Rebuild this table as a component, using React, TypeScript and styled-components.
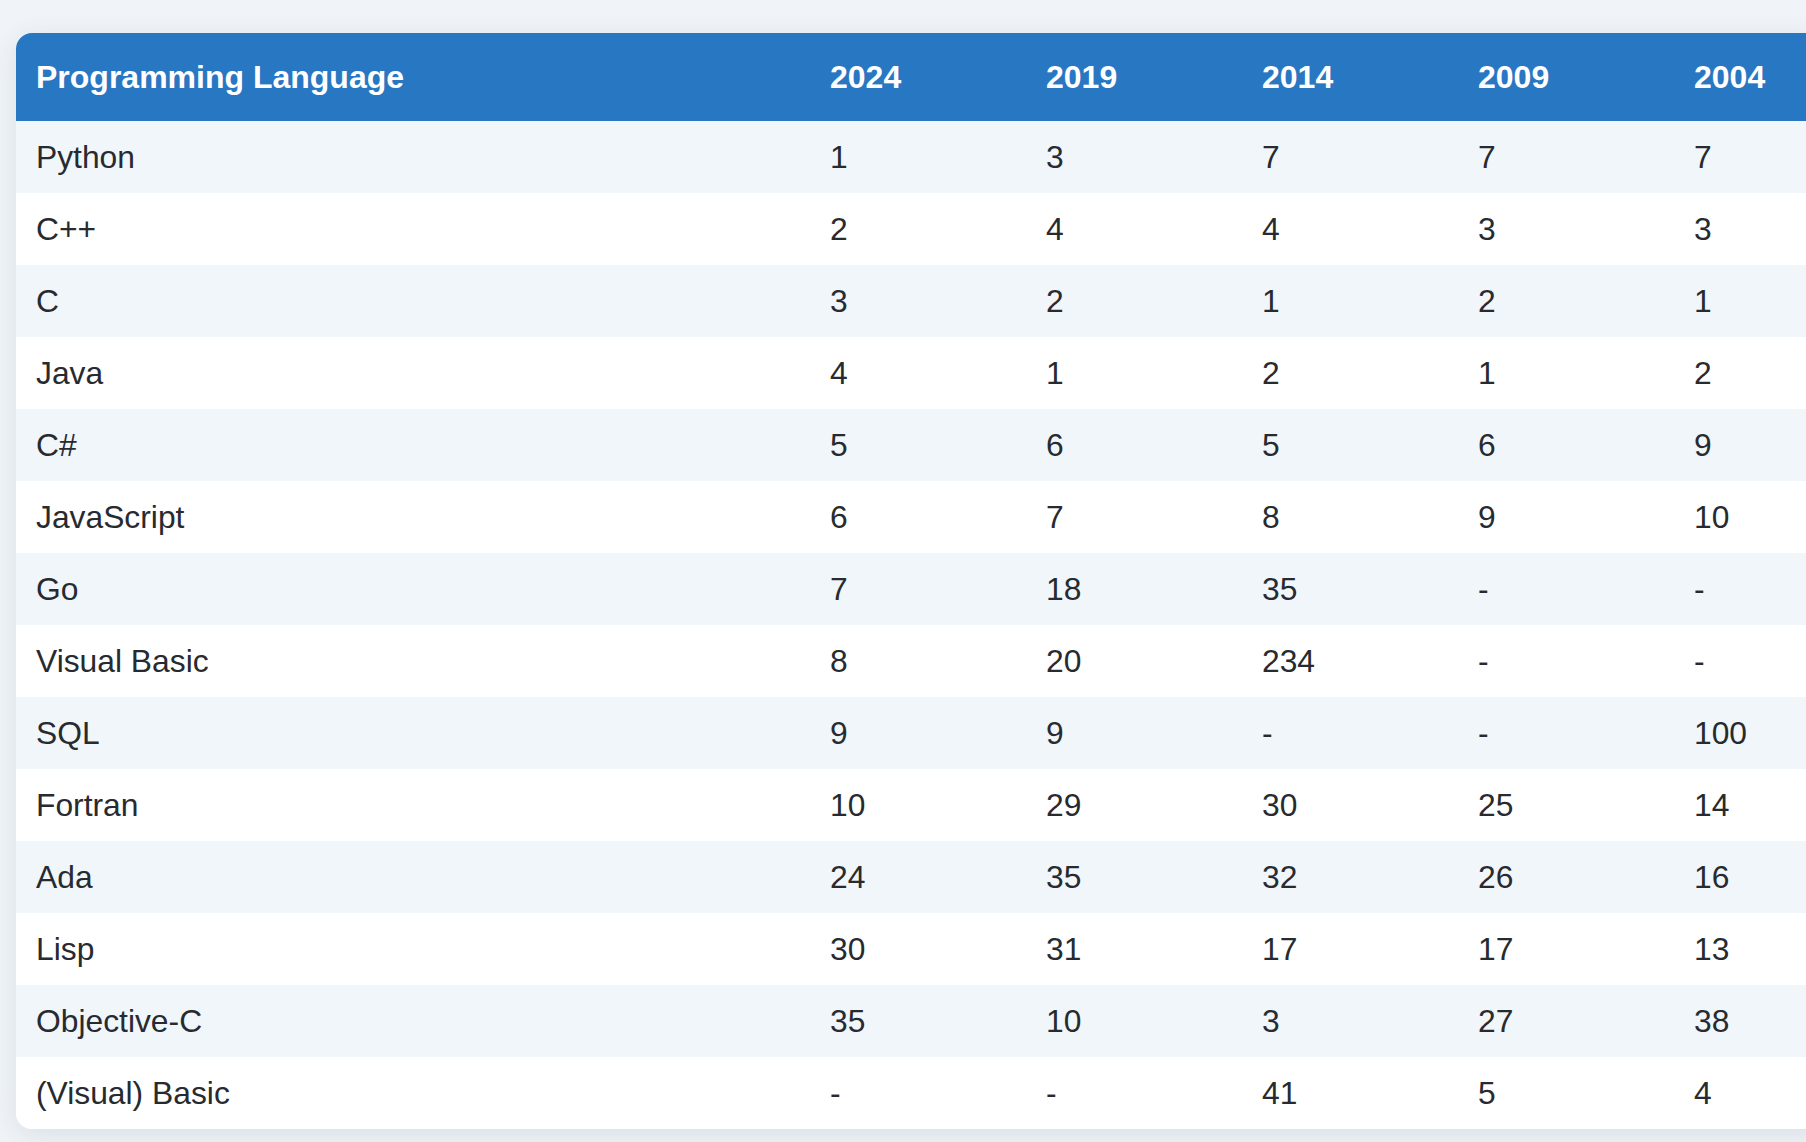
import styled, { createGlobalStyle } from "styled-components";

const GlobalStyle = createGlobalStyle`
  html, body {
    margin: 0;
    padding: 0;
    background: #f0f4f8;
    overflow: hidden;
  }
`;

const Page = styled.div`
  width: 100vw;
  height: 100vh;
  overflow: hidden;
  padding: 33px 0 0 16px;
  box-sizing: border-box;
  font-family: "Liberation Sans", Arial, Helvetica, sans-serif;
`;

const Card = styled.div`
  width: 1874px;
  border-radius: 16px;
  overflow: hidden;
  background: #ffffff;
  box-shadow: 0 6px 28px rgba(30, 50, 80, 0.1);
`;

const RankTable = styled.table`
  width: 1874px;
  border-collapse: collapse;
  table-layout: fixed;
`;

const HeadRow = styled.tr`
  background: #2877c2;
  height: 88px;
`;

const HeadCell = styled.th`
  padding: 0 20px;
  text-align: left;
  color: #ffffff;
  font-size: 32px;
  font-weight: 700;
  vertical-align: middle;
`;

const BodyRow = styled.tr<{ $striped: boolean }>`
  height: 72px;
  background: ${(p) => (p.$striped ? "#f1f6fa" : "#ffffff")};
`;

const Cell = styled.td`
  padding: 0 20px;
  color: #272b30;
  font-size: 31.8px;
  vertical-align: middle;
  white-space: nowrap;
`;

const years = ["2024", "2019", "2014", "2009", "2004"];

const rows: [string, string[]][] = [
  ["Python", ["1", "3", "7", "7", "7"]],
  ["C++", ["2", "4", "4", "3", "3"]],
  ["C", ["3", "2", "1", "2", "1"]],
  ["Java", ["4", "1", "2", "1", "2"]],
  ["C#", ["5", "6", "5", "6", "9"]],
  ["JavaScript", ["6", "7", "8", "9", "10"]],
  ["Go", ["7", "18", "35", "-", "-"]],
  ["Visual Basic", ["8", "20", "234", "-", "-"]],
  ["SQL", ["9", "9", "-", "-", "100"]],
  ["Fortran", ["10", "29", "30", "25", "14"]],
  ["Ada", ["24", "35", "32", "26", "16"]],
  ["Lisp", ["30", "31", "17", "17", "13"]],
  ["Objective-C", ["35", "10", "3", "27", "38"]],
  ["(Visual) Basic", ["-", "-", "41", "5", "4"]],
];

export default function App() {
  return (
    <>
      <GlobalStyle />
      <Page>
        <Card>
          <RankTable>
            <colgroup>
              <col style={{ width: 794 }} />
              {years.map((y) => (
                <col key={y} style={{ width: 216 }} />
              ))}
            </colgroup>
            <thead>
              <HeadRow>
                <HeadCell>Programming Language</HeadCell>
                {years.map((y) => (
                  <HeadCell key={y}>{y}</HeadCell>
                ))}
              </HeadRow>
            </thead>
            <tbody>
              {rows.map(([name, ranks], i) => (
                <BodyRow key={name} $striped={i % 2 === 0}>
                  <Cell>{name}</Cell>
                  {ranks.map((r, j) => (
                    <Cell key={j}>{r}</Cell>
                  ))}
                </BodyRow>
              ))}
            </tbody>
          </RankTable>
        </Card>
      </Page>
    </>
  );
}
